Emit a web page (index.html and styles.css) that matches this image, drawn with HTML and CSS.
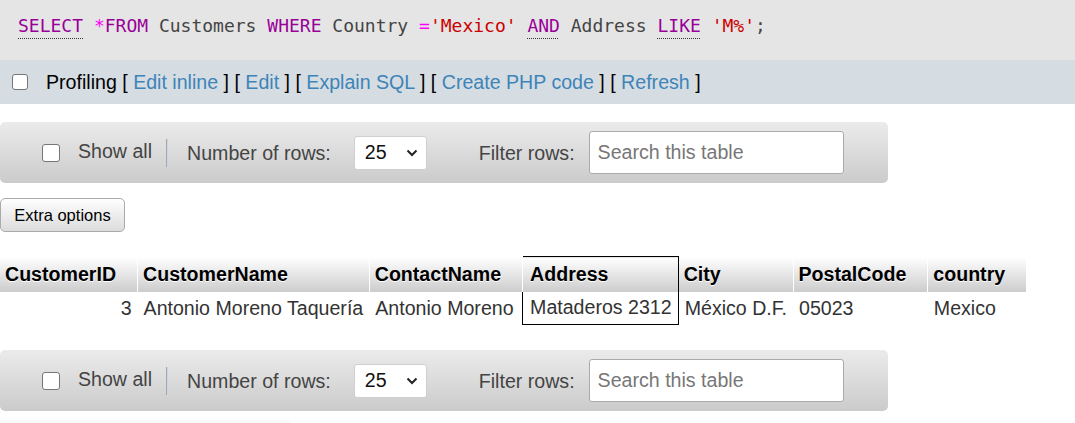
FILE: index.html
```html
<!DOCTYPE html>
<html>
<head>
<meta charset="utf-8">
<link rel="stylesheet" href="styles.css">
</head>
<body>
<div class="sql"><code><span class="kw u">SELECT</span> <span class="op">*</span><span class="kw">FROM</span> Customers <span class="kw">WHERE</span> Country <span class="op">=</span><span class="str">'Mexico'</span> <span class="kw u">AND</span> Address <span class="kw u">LIKE</span> <span class="str">'M%'</span>;</code></div>
<div class="tools">
  <input type="checkbox" class="cb cb-sm">
  <span class="tools-text">Profiling [ <a href="#">Edit inline</a> ] [ <a href="#">Edit</a> ] [ <a href="#">Explain SQL</a> ] [ <a href="#">Create PHP code</a> ] [ <a href="#">Refresh</a> ]</span>
</div>

<div class="navbar">
  <input type="checkbox" class="cb">
  <span class="lbl showall">Show all</span>
  <span class="sep"></span>
  <span class="lbl">Number of rows:</span>
  <div class="select"><span>25</span><svg width="12" height="8" viewBox="0 0 12 8"><polyline points="1.5,1.5 6,6 10.5,1.5" fill="none" stroke="#222" stroke-width="2"/></svg></div>
  <span class="lbl filter">Filter rows:</span>
  <div class="search">Search this table</div>
</div>

<button class="extra">Extra options</button>

<table class="data">
  <thead>
    <tr><th>CustomerID</th><th>CustomerName</th><th>ContactName</th><th class="marked">Address</th><th>City</th><th>PostalCode</th><th>country</th></tr>
  </thead>
  <tbody>
    <tr><td class="num">3</td><td>Antonio Moreno Taquería</td><td>Antonio Moreno</td><td class="marked">Mataderos 2312</td><td>México D.F.</td><td>05023</td><td>Mexico</td></tr>
  </tbody>
</table>

<div class="navbar">
  <input type="checkbox" class="cb">
  <span class="lbl showall">Show all</span>
  <span class="sep"></span>
  <span class="lbl">Number of rows:</span>
  <div class="select"><span>25</span><svg width="12" height="8" viewBox="0 0 12 8"><polyline points="1.5,1.5 6,6 10.5,1.5" fill="none" stroke="#222" stroke-width="2"/></svg></div>
  <span class="lbl filter">Filter rows:</span>
  <div class="search">Search this table</div>
</div>

<div class="strip"></div>
</body>
</html>
```

FILE: styles.css
```css
html, body {
  margin: 0;
  padding: 0;
  background: #fff;
}
body {
  font-family: "Liberation Sans", Arial, sans-serif;
  font-size: 19.6px;
  color: #333;
  overflow: hidden;
}
.sql {
  background: #e5e5e5;
  height: 60px;
  box-sizing: border-box;
  padding: 14px 18px 0;
  line-height: 22px;
}
.sql code {
  font-family: "DejaVu Sans Mono", "Liberation Mono", monospace;
  font-size: 18px;
  color: #444;
}
.kw { color: #909; }
.kw.u {
  text-decoration: underline dotted #333;
  text-decoration-thickness: 1px;
  text-underline-offset: 6px;
}
.op { color: #f0f; }
.str { color: #c00; }

.tools {
  background: #d5dce2;
  height: 44px;
  display: flex;
  align-items: center;
  padding-left: 12px;
  color: #000;
}
.tools-text { margin-left: 18px; }
.tools a {
  color: #3d84b8;
  text-decoration: none;
}
.cb {
  appearance: none;
  -webkit-appearance: none;
  margin: 0;
  width: 18px;
  height: 18px;
  border: 1px solid #767676;
  border-radius: 3px;
  background: #fff;
  box-sizing: border-box;
  flex: none;
}
.cb-sm {
  width: 16px;
  height: 16px;
  border-radius: 3px;
}

.navbar {
  margin-top: 18px;
  width: 888px;
  height: 61px;
  box-sizing: border-box;
  border-radius: 5px;
  background: linear-gradient(#ebebeb, #cbcbcb);
  display: flex;
  align-items: center;
  padding-left: 42px;
  color: #444;
}
.lbl { line-height: 22px; }
.showall { margin-left: 18px; margin-top: -4px; }
.sep {
  width: 1px;
  height: 28px;
  background: #a7a7a7;
  border-right: 1px solid #c8d6e6;
  margin: 0 19px 0 14px;
}
.select {
  margin-left: 23px;
  width: 73px;
  height: 34px;
  box-sizing: border-box;
  background: #fff;
  border: 1px solid #cfcfcf;
  border-radius: 3px;
  display: flex;
  align-items: center;
  justify-content: space-between;
  padding: 0 8px 0 10px;
  color: #111;
}
.filter { margin-left: 52px; }
.search {
  margin-left: 14px;
  width: 255px;
  height: 43px;
  box-sizing: border-box;
  background: #fff;
  border: 1px solid #aaa;
  border-radius: 3px;
  display: flex;
  align-items: center;
  padding-left: 8px;
  color: #777;
}

.extra {
  display: block;
  margin-top: 15px;
  width: 125px;
  height: 34px;
  padding: 0;
  font-family: "Liberation Sans", Arial, sans-serif;
  font-size: 16.5px;
  color: #000;
  background: linear-gradient(#fefefe, #dcdcdc);
  border: 1px solid #aaa;
  border-radius: 5px;
}

.data {
  margin-top: 24px;
  border-collapse: collapse;
}
.data th {
  height: 35px;
  box-sizing: border-box;
  padding: 1px 21px 0 5px;
  text-align: left;
  font-weight: bold;
  color: #000;
  text-shadow: 0 1px 0 #fff;
  background: linear-gradient(#ffffff, #cccccc);
  border-right: 1px solid #fff;
  white-space: nowrap;
}
.data th:last-child { border-right: none; }
.data td {
  height: 33px;
  box-sizing: border-box;
  padding: 0 6px;
  color: #333;
  white-space: nowrap;
}
.data td.num { text-align: right; }
.data th.marked {
  border: 1px solid #000;
  border-bottom: none;
  padding-left: 7px;
}
.data td.marked {
  border: 1px solid #000;
  border-top: none;
  padding-left: 7px;
}

.data + .navbar { margin-top: 25px; }

.strip {
  margin-top: 6px;
  width: 290px;
  height: 12px;
  background: linear-gradient(#ffffff, #f3f3f3);
}
```
